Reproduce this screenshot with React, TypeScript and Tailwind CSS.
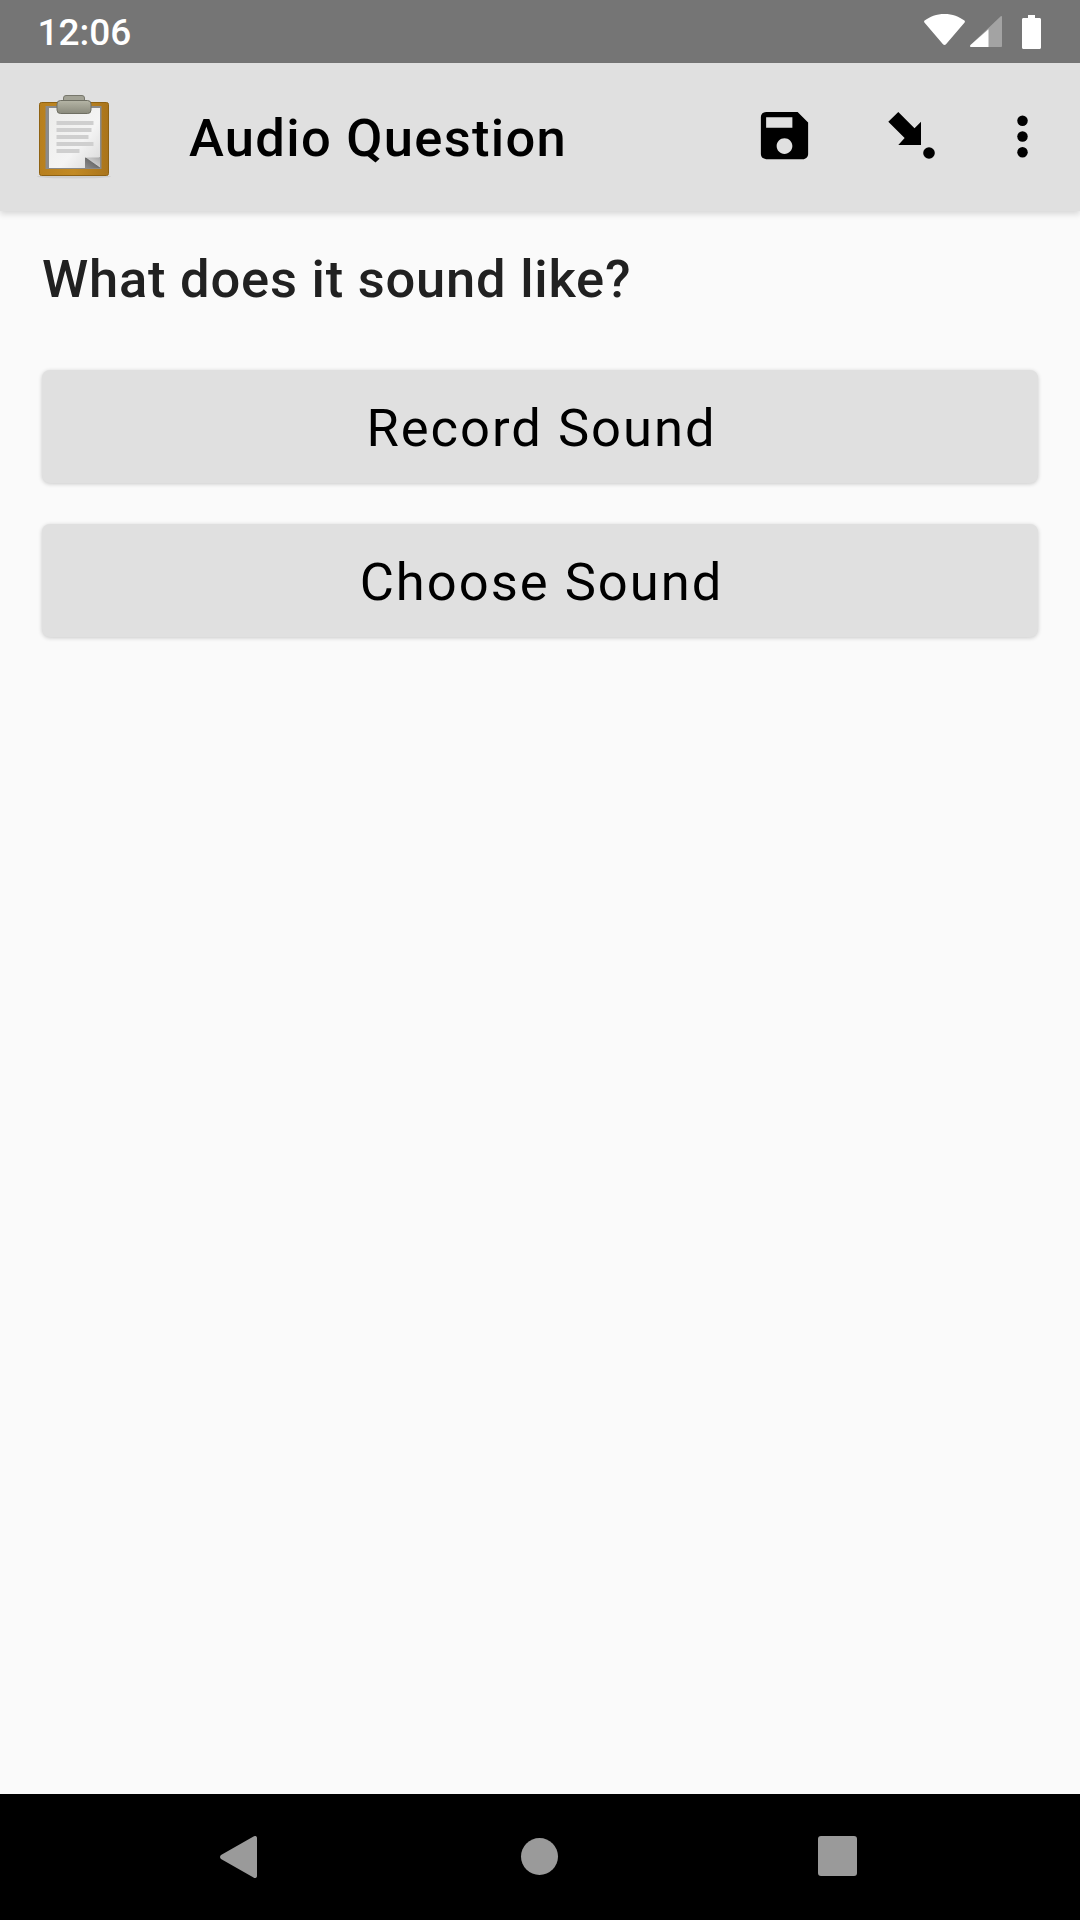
export default function App() {
  return (
    <div className="flex h-[1920px] w-[1080px] flex-col overflow-hidden bg-[#fafafa] font-['Roboto',sans-serif]">
      <div className="flex h-[63px] shrink-0 items-center bg-[#757575] pl-[37.5px] text-white">
        <span className="mt-[1px] text-[37px] leading-none font-medium">12:06</span>
        <div className="ml-auto flex items-center pr-[39px]">
          <svg width="41" height="31" viewBox="0 0 41 31" className="mr-[5px] mb-[4px]">
            <path d="M20.5 0C12.5 0 5.8 2.6 0.6 6.6c-0.6 0.5-0.7 1.2-0.2 1.8L19 30.2c0.8 1 2.2 1 3 0L40.6 8.4c0.5-0.6 0.4-1.3-0.2-1.8C35.200 2.600 28.500 0 20.500 0z" fill="#fff" />
          </svg>
          <svg width="32" height="31" viewBox="0 0 32 31" className="mr-[20px]">
            <path d="M32 1c0-1-0.800-1.200-1.500-0.500L0.500 29c-0.600 0.700-0.400 2 0.500 2h30c0.600 0 1-0.400 1-1z" fill="#a3a3a3" />
            <path d="M18.500 13.300L0.500 29c-0.600 0.700-0.400 2 0.500 2h17.500z" fill="#fff" />
          </svg>
          <svg width="19" height="34" viewBox="0 0 19 34">
            <path d="M6 0h7v3h4.500c0.900 0 1.500 0.600 1.500 1.500v28c0 0.900-0.600 1.500-1.500 1.500h-16C0.600 34 0 33.400 0 32.500v-28C0 3.600 0.600 3 1.500 3H6z" fill="#fff" />
          </svg>
        </div>
      </div>

      <div className="relative z-10 flex h-[148px] shrink-0 items-center bg-[#e0e0e0] shadow-[0_3px_6px_rgba(0,0,0,0.14)]">
        <svg width="74" height="84" viewBox="0 0 74 84" className="ml-[37px]">
          <defs>
            <linearGradient id="wood" x1="0" x2="1" y1="0" y2="0">
              <stop offset="0" stopColor="#b77f1e" />
              <stop offset="0.5" stopColor="#c28a24" />
              <stop offset="1" stopColor="#a9741c" />
            </linearGradient>
            <linearGradient id="paper" x1="0" x2="1" y1="0" y2="1">
              <stop offset="0" stopColor="#ececea" />
              <stop offset="0.6" stopColor="#f4f4f4" />
              <stop offset="1" stopColor="#d8d8d8" />
            </linearGradient>
            <linearGradient id="clip" x1="0" x2="0" y1="0" y2="1">
              <stop offset="0" stopColor="#b5b5a6" />
              <stop offset="1" stopColor="#8a8a7c" />
            </linearGradient>
            <linearGradient id="fold" x1="0" x2="1" y1="1" y2="0">
              <stop offset="0" stopColor="#8d8d8d" />
              <stop offset="0.5" stopColor="#6e6e6e" />
              <stop offset="0.55" stopColor="#c8c8c8" />
              <stop offset="1" stopColor="#a8a8a8" />
            </linearGradient>
          </defs>
          <ellipse cx="37" cy="81.500" rx="37" ry="2" fill="#000" opacity="0.08" />
          <rect x="2.500" y="7.500" width="69" height="73" rx="2" fill="url(#wood)" stroke="#8f6212" strokeWidth="1" />
          <rect x="8.500" y="11" width="56" height="63" fill="#8a8a8a" />
          <path d="M12 13h51v49l-11 11H12z" fill="url(#paper)" />
          <g fill="#cfcfcf">
            <rect x="19.500" y="26" width="37" height="4" />
            <rect x="19.500" y="33" width="35" height="4" />
            <rect x="19.500" y="40" width="32" height="4" />
            <rect x="19.500" y="47" width="37" height="4" />
            <rect x="19.500" y="54" width="23" height="4" />
          </g>
          <path d="M48 62.500h15V73H48z" fill="url(#fold)" />
          <rect x="26.500" y="0.500" width="21" height="10" rx="2.500" fill="#a3a396" stroke="#77776c" />
          <rect x="20" y="5.500" width="34" height="13" rx="3.500" fill="url(#clip)" stroke="#6f6f63" />
        </svg>
        <div className="mt-[2px] ml-[78px] text-[52.5px] leading-none font-medium tracking-[1.3px] text-black">Audio Question</div>
        <div className="mb-[3px] ml-auto flex items-center pr-[26px]">
          <svg width="63" height="63" viewBox="0 0 24 24" fill="#000">
            <path d="M17 3H5c-1.110 0-2 .9-2 2v14c0 1.100.89 2 2 2h14c1.100 0 2-.9 2-2V7l-4-4zm-5 16c-1.660 0-3-1.340-3-3s1.340-3 3-3 3 1.340 3 3-1.340 3-3 3zm3-10H5V5h10v4z" />
          </svg>
          <svg width="63" height="63" viewBox="0 0 63 63" fill="#000" className="ml-[64px]">
            <path d="M18.300 8L34.500 24.200L41 17.700V41H18.300L24.650 34.050L8.300 17.700Z" />
            <circle cx="49" cy="49" r="5.800" />
          </svg>
          <svg width="63" height="63" viewBox="0 0 24 24" fill="#000" className="mt-[2px] ml-[48px]">
            <circle cx="12" cy="6" r="2" />
            <circle cx="12" cy="12" r="2" />
            <circle cx="12" cy="18" r="2" />
          </svg>
        </div>
      </div>

      <div className="flex min-h-0 flex-1 flex-col px-[42px]">
        <h1 className="mt-[40px] text-[52.5px] leading-[56px] font-medium tracking-[0.77px] text-[#212121]">
          What does it sound like?
        </h1>
        <button className="mt-[63px] flex h-[113px] w-[996px] items-center justify-center rounded-[8px] bg-[#e0e0e0] pt-[3px] pl-[3px] text-[52.5px] tracking-[2px] text-black shadow-[0_1px_4px_rgba(0,0,0,0.2)]">
          Record Sound
        </button>
        <button className="mt-[41px] flex h-[113px] w-[996px] items-center justify-center rounded-[8px] bg-[#e0e0e0] pt-[3px] pl-[3px] text-[52.5px] tracking-[2px] text-black shadow-[0_1px_4px_rgba(0,0,0,0.2)]">
          Choose Sound
        </button>
      </div>

      <div className="flex h-[126px] shrink-0 items-center bg-black pl-[220px]">
        <svg width="37" height="42" viewBox="0 0 37 42" fill="#9a9a9a">
          <path d="M33.500 0.600c1.700-1.300 3.500-0.500 3.500 1.400v38c0 1.900-1.800 2.700-3.500 1.400L1 23c-1.300-1-1.300-3 0-4z" />
        </svg>
        <div className="mb-[2px] ml-[264px] h-[37px] w-[37px] rounded-full bg-[#9a9a9a]" />
        <div className="mb-[2px] ml-[260px] h-[40px] w-[39px] rounded-[3px] bg-[#9a9a9a]" />
      </div>
    </div>
  );
}
